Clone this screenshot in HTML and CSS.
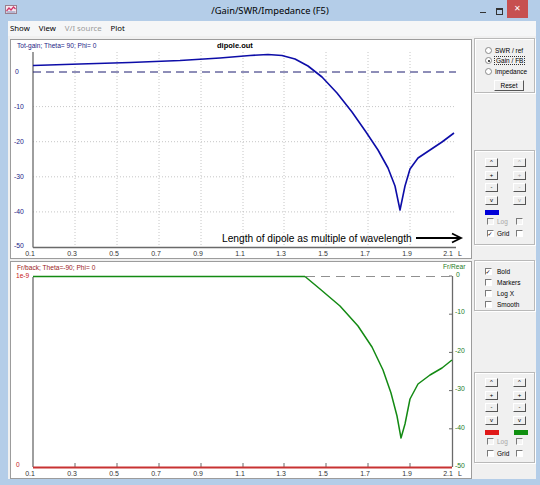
FILE: index.html
```html
<!DOCTYPE html>
<html>
<head>
  <meta charset="UTF-8"/>
  <title>/Gain/SWR/Impedance (F5)</title>
  <link rel="stylesheet" href="styles.css">
</head>
<body>
  <div class="titlebar">
    <div class="tb-side">
      <svg class="app-icon" width="12" height="9" viewBox="0 0 12 9">
        <rect x="0.5" y="0.5" width="11" height="8" fill="#f4e8ee" stroke="#9a7f8e"/>
        <polyline points="1.5,6 4,3 6,5 8.5,2 10.5,4" fill="none" stroke="#d0356a" stroke-width="1.2"/>
        <line x1="1.5" y1="7" x2="10.5" y2="7" stroke="#5a6fa8" stroke-width="0.8"/>
      </svg>
    </div>
    <div class="title">/Gain/SWR/Impedance (F5)</div>
    <div class="tb-side wbtns">
      <span class="wbtn-min"></span>
      <span class="wbtn-max"></span>
      <span class="wbtn-close">&#x2715;</span>
    </div>
  </div>

  <div class="client">
    <div class="menubar">
      <span>Show</span>
      <span>View</span>
      <span class="disabled">V/I source</span>
      <span>Plot</span>
    </div>

    <div class="workspace">
      <div class="plots">
        <!-- gain plot -->
        <div class="plot top">
          <svg width="460" height="218" viewBox="11 40 460 218">
            <text class="cap navy" x="17" y="48">Tot-gain; Theta= 90; Phi= 0</text>
            <text class="file" x="217" y="48">dipole.out</text>

            <g class="grid">
              <line x1="75" y1="52" x2="75" y2="247"/>
              <line x1="117" y1="52" x2="117" y2="247"/>
              <line x1="159" y1="52" x2="159" y2="247"/>
              <line x1="201" y1="52" x2="201" y2="247"/>
              <line x1="243" y1="52" x2="243" y2="247"/>
              <line x1="284" y1="52" x2="284" y2="247"/>
              <line x1="326" y1="52" x2="326" y2="247"/>
              <line x1="368" y1="52" x2="368" y2="247"/>
              <line x1="410" y1="52" x2="410" y2="247"/>
              <line x1="33" y1="106.6" x2="455" y2="106.6"/>
              <line x1="33" y1="141.7" x2="455" y2="141.7"/>
              <line x1="33" y1="176.8" x2="455" y2="176.8"/>
              <line x1="33" y1="211.9" x2="455" y2="211.9"/>
            </g>

            <line class="axis" x1="33" y1="52" x2="33" y2="247.5"/>
            <line class="axis" x1="33" y1="247.5" x2="456" y2="247.5"/>
            <line class="zero-navy" x1="33" y1="72" x2="456" y2="72"/>

            <g class="ylab navy">
              <text x="15" y="74">0</text>
              <text x="14" y="109">-10</text>
              <text x="14" y="144">-20</text>
              <text x="14" y="179">-30</text>
              <text x="14" y="214">-40</text>
              <text x="14" y="248">-50</text>
            </g>
            <g class="xlab">
              <text x="30" y="256">0.1</text>
              <text x="72" y="256">0.3</text>
              <text x="114" y="256">0.5</text>
              <text x="156" y="256">0.7</text>
              <text x="198" y="256">0.9</text>
              <text x="240" y="256">1.1</text>
              <text x="281" y="256">1.3</text>
              <text x="323" y="256">1.5</text>
              <text x="365" y="256">1.7</text>
              <text x="407" y="256">1.9</text>
              <text x="448" y="256">2.1</text>
              <text x="460" y="256">L</text>
            </g>

            <polyline class="curve-blue" points="33,65.5 80,64 130,62.5 180,60.5 220,58 250,55.5 268,54.5 282,55.5 295,59 308,66 322,77 337,93 352,112 366,132 378,150 388,168 395,186 400,210 405,186 410,169 418,158 430,150 442,142 454,133"/>

            <text class="note" x="222" y="241.5">Length of dipole as multiple of wavelength</text>
            <line class="arrow" x1="416" y1="238" x2="460" y2="238"/>
            <polyline class="arrow" points="452,233.5 461,238 452,242.5"/>
          </svg>
        </div>

        <!-- front/back plot -->
        <div class="plot bottom">
          <svg width="460" height="216" viewBox="11 262 460 216">
            <text class="cap darkred" x="17" y="270">Fr/back; Theta=-90; Phi= 0</text>
            <text class="cap red" x="16" y="278">1e-9</text>
            <text class="cap green" x="443" y="269">Fr/Rear</text>

            <line class="axis" x1="33" y1="277" x2="33" y2="467"/>
            <line class="axis" x1="452.5" y1="276" x2="452.5" y2="467"/>

            <g class="tick">
              <line x1="449" y1="276" x2="452" y2="276"/>
              <line x1="449" y1="314.2" x2="452" y2="314.2"/>
              <line x1="449" y1="352.4" x2="452" y2="352.4"/>
              <line x1="449" y1="390.6" x2="452" y2="390.6"/>
              <line x1="449" y1="428.8" x2="452" y2="428.8"/>
              <line x1="75" y1="463" x2="75" y2="467"/>
              <line x1="117" y1="463" x2="117" y2="467"/>
              <line x1="159" y1="463" x2="159" y2="467"/>
              <line x1="201" y1="463" x2="201" y2="467"/>
              <line x1="243" y1="463" x2="243" y2="467"/>
              <line x1="284" y1="463" x2="284" y2="467"/>
              <line x1="326" y1="463" x2="326" y2="467"/>
              <line x1="368" y1="463" x2="368" y2="467"/>
              <line x1="410" y1="463" x2="410" y2="467"/>
            </g>

            <g class="ylab green">
              <text x="456" y="277">0</text>
              <text x="455" y="314">-10</text>
              <text x="455" y="352.5">-20</text>
              <text x="455" y="391">-30</text>
              <text x="455" y="430">-40</text>
              <text x="455" y="468">-50</text>
            </g>

            <line class="curve-green" x1="33" y1="276.5" x2="305" y2="276.5"/>
            <line class="zero-grey" x1="306" y1="276.5" x2="450" y2="276.5"/>
            <polyline class="curve-green" points="305,276.5 320,289 340,306 358,326 372,347 383,370 391,393 397,416 401,438 405,424 410,399 418,384 430,375 442,368 452,360"/>

            <line class="base-red" x1="33" y1="467.5" x2="452" y2="467.5"/>
            <text class="cap red" x="16" y="467">0</text>

            <g class="xlab">
              <text x="30" y="476">0.1</text>
              <text x="72" y="476">0.3</text>
              <text x="114" y="476">0.5</text>
              <text x="156" y="476">0.7</text>
              <text x="198" y="476">0.9</text>
              <text x="240" y="476">1.1</text>
              <text x="281" y="476">1.3</text>
              <text x="323" y="476">1.5</text>
              <text x="365" y="476">1.7</text>
              <text x="407" y="476">1.9</text>
              <text x="448" y="476">2.1</text>
              <text x="460" y="476">L</text>
            </g>
          </svg>
        </div>
      </div>

      <div class="controls">
        <div class="group radios">
          <div class="row"><span class="radio"></span>SWR / ref</div>
          <div class="row"><span class="radio on"></span><span class="focus">Gain / FB</span></div>
          <div class="row"><span class="radio"></span>Impedance</div>
          <div class="btn reset">Reset</div>
        </div>

        <div class="group scale top-scale">
          <div class="btngrid">
            <div class="btn sm">^</div><div class="btn sm off">^</div>
            <div class="btn sm">+</div><div class="btn sm off">+</div>
            <div class="btn sm">-</div><div class="btn sm off">-</div>
            <div class="btn sm">v</div><div class="btn sm off">v</div>
          </div>
          <div class="bars">
            <span class="bar blue"></span>
          </div>
          <div class="row chk-row"><span class="chk off"></span><span class="lbl off">Log</span><span class="chk off right"></span></div>
          <div class="row chk-row"><span class="chk on"></span><span class="lbl">Grid</span><span class="chk right"></span></div>
        </div>

        <div class="group options">
          <div class="row"><span class="chk on"></span>Bold</div>
          <div class="row"><span class="chk"></span>Markers</div>
          <div class="row"><span class="chk"></span>Log X</div>
          <div class="row"><span class="chk"></span>Smooth</div>
        </div>

        <div class="group scale bottom-scale">
          <div class="btngrid">
            <div class="btn sm">^</div><div class="btn sm">^</div>
            <div class="btn sm">+</div><div class="btn sm">+</div>
            <div class="btn sm">-</div><div class="btn sm">-</div>
            <div class="btn sm">v</div><div class="btn sm">v</div>
          </div>
          <div class="bars">
            <span class="bar red"></span>
            <span class="bar green"></span>
          </div>
          <div class="row chk-row"><span class="chk off"></span><span class="lbl off">Log</span><span class="chk off right"></span></div>
          <div class="row chk-row"><span class="chk"></span><span class="lbl">Grid</span><span class="chk right"></span></div>
        </div>
      </div>
    </div>
  </div>
</body>
</html>
```

FILE: styles.css
```css
body {
  margin: 0;
  width: 540px;
  height: 485px;
  overflow: hidden;
  background: #b4cde8;
  font-family: "Liberation Sans", Arial, sans-serif;
}

/* title bar */
.titlebar {
  height: 21px;
  display: flex;
  align-items: center;
}
.tb-side {
  width: 66px;
  height: 21px;
  display: flex;
  align-items: center;
}
.app-icon {
  margin-left: 5px;
  margin-top: -2px;
}
.title {
  flex: 1;
  text-align: center;
  font-family: "Noto Sans", sans-serif;
  font-size: 9.3px;
  color: #000;
  margin-top: -1px;
}
.wbtns {
  align-items: flex-start;
}
.wbtn-min {
  width: 6px;
  height: 0;
  border-top: 1.5px solid #333;
  margin: 12px 0 0 6px;
}
.wbtn-max {
  width: 5px;
  height: 4px;
  border: 1px solid #333;
  border-top-width: 2px;
  margin: 8px 0 0 10px;
}
.wbtn-close {
  width: 21px;
  height: 18px;
  margin-left: 4px;
  background: #c75050;
  color: #fff;
  font-size: 8px;
  line-height: 17px;
  text-align: center;
}

/* client area */
.client {
  margin: 0 4px 0 8px;
  height: 458px;
  background: #f0f0f0;
}
.menubar {
  height: 15px;
  display: flex;
  gap: 9px;
  padding-left: 2px;
  font-family: "Noto Sans", sans-serif;
  font-size: 7.8px;
  line-height: 14px;
  color: #000;
  background: #f5f6f7;
}
.menubar .disabled {
  color: #9a9a9a;
}
.workspace {
  display: flex;
  gap: 2px;
  padding: 3px 0 0 2px;
}
.plots {
  display: flex;
  flex-direction: column;
  gap: 2px;
  width: 462px;
}
.plot {
  background: #fff;
  border: 1px solid #9c9c9c;
}
.plot svg {
  display: block;
}
.plot.top {
  height: 218px;
}
.plot.bottom {
  height: 216px;
}

/* chart text and lines */
.cap {
  font-size: 6.6px;
}
.file {
  font-size: 7.5px;
  font-weight: bold;
}
.navy { fill: #1c1c86; }
.darkred { fill: #9a1c1c; }
.red { fill: #c82020; }
.green { fill: #1e7a1e; }
.ylab text {
  font-size: 6.8px;
}
.xlab text {
  font-size: 7px;
  fill: #333;
  text-anchor: middle;
}
.grid line {
  stroke: #b8b8b8;
  stroke-width: 0.8;
  stroke-dasharray: 1 2;
}
.axis {
  stroke: #6a6a6a;
  stroke-width: 1.3;
}
.tick line {
  stroke: #6a6a6a;
  stroke-width: 1;
}
.zero-navy {
  stroke: #1c1c70;
  stroke-width: 1;
  stroke-dasharray: 8 5;
}
.zero-grey {
  stroke: #909090;
  stroke-width: 1.2;
  stroke-dasharray: 9 6;
}
.curve-blue {
  fill: none;
  stroke: #0d0da8;
  stroke-width: 1.6;
  stroke-linejoin: round;
}
.curve-green {
  fill: none;
  stroke: #138a13;
  stroke-width: 1.5;
  stroke-linejoin: round;
}
.base-red {
  stroke: #c83232;
  stroke-width: 2;
}
.note {
  font-size: 10.2px;
  fill: #000;
}
.arrow {
  fill: none;
  stroke: #000;
  stroke-width: 1.8;
}

/* right control column */
.controls {
  width: 61px;
  display: flex;
  flex-direction: column;
  font-size: 6.5px;
  color: #000;
}
.group {
  box-sizing: border-box;
  border: 1px solid #b9b9b9;
  box-shadow: inset 1px 1px #fff, 1px 1px #fff;
}
.row {
  display: flex;
  align-items: center;
}
.radios {
  height: 55px;
  margin-top: -1px;
  padding: 6px 0 0 10px;
}
.radios .row {
  height: 10.5px;
}
.radio {
  width: 5px;
  height: 5px;
  border: 1px solid #8a8a8a;
  border-radius: 50%;
  background: #fff;
  margin-right: 3px;
  position: relative;
}
.radio.on::after {
  content: "";
  position: absolute;
  left: 1.5px;
  top: 1.5px;
  width: 2px;
  height: 2px;
  border-radius: 50%;
  background: #111;
}
.focus {
  outline: 1px dotted #333;
  padding: 0 1px;
}
.btn {
  box-sizing: border-box;
  background: #f0f0f0;
  border: 1px solid;
  border-color: #fff #555 #555 #fff;
  text-align: center;
}
.reset {
  width: 30px;
  height: 11px;
  line-height: 9px;
  margin: 3px 0 0 9px;
}

.scale {
  padding: 7px 0 0 10px;
}
.top-scale {
  margin-top: 57px;
  height: 95px;
}
.bottom-scale {
  margin-top: 61px;
  height: 91px;
  padding-top: 5px;
}
.btngrid {
  display: grid;
  grid-template-columns: 13px 13px;
  column-gap: 15px;
  row-gap: 3.5px;
}
.btn.sm {
  height: 9px;
  font-size: 6px;
  line-height: 7px;
}
.btn.off {
  color: #a8a8a8;
}
.bars {
  display: flex;
  gap: 15px;
  margin-top: 5px;
  height: 5px;
}
.bar {
  width: 14px;
  height: 5px;
}
.bar.blue { background: #0000d8; }
.bar.red { background: #e01818; }
.bar.green { background: #109010; }
.chk-row {
  height: 11px;
  margin-top: 1px;
  padding-left: 2px;
}
.chk {
  box-sizing: border-box;
  width: 7px;
  height: 7px;
  border: 1px solid;
  border-color: #7a7a7a #fff #fff #7a7a7a;
  background: #fff;
  margin-right: 3px;
  position: relative;
  font-size: 7px;
  line-height: 5px;
  text-align: center;
}
.chk.on::after {
  content: "\2713";
  position: absolute;
  left: -0.5px;
  top: 0;
  font-weight: bold;
  font-family: "DejaVu Sans", sans-serif;
  font-size: 6px;
  color: #000;
}
.chk.off {
  background: #f4f4f4;
}
.lbl {
  width: 19px;
}
.lbl.off {
  color: #a8a8a8;
}
.chk.right {
  margin-left: 0;
}

.options {
  margin-top: 15px;
  height: 51px;
  padding: 5px 0 0 10px;
}
.options .row {
  height: 11px;
}
.options .chk {
  margin-right: 5px;
}
```
